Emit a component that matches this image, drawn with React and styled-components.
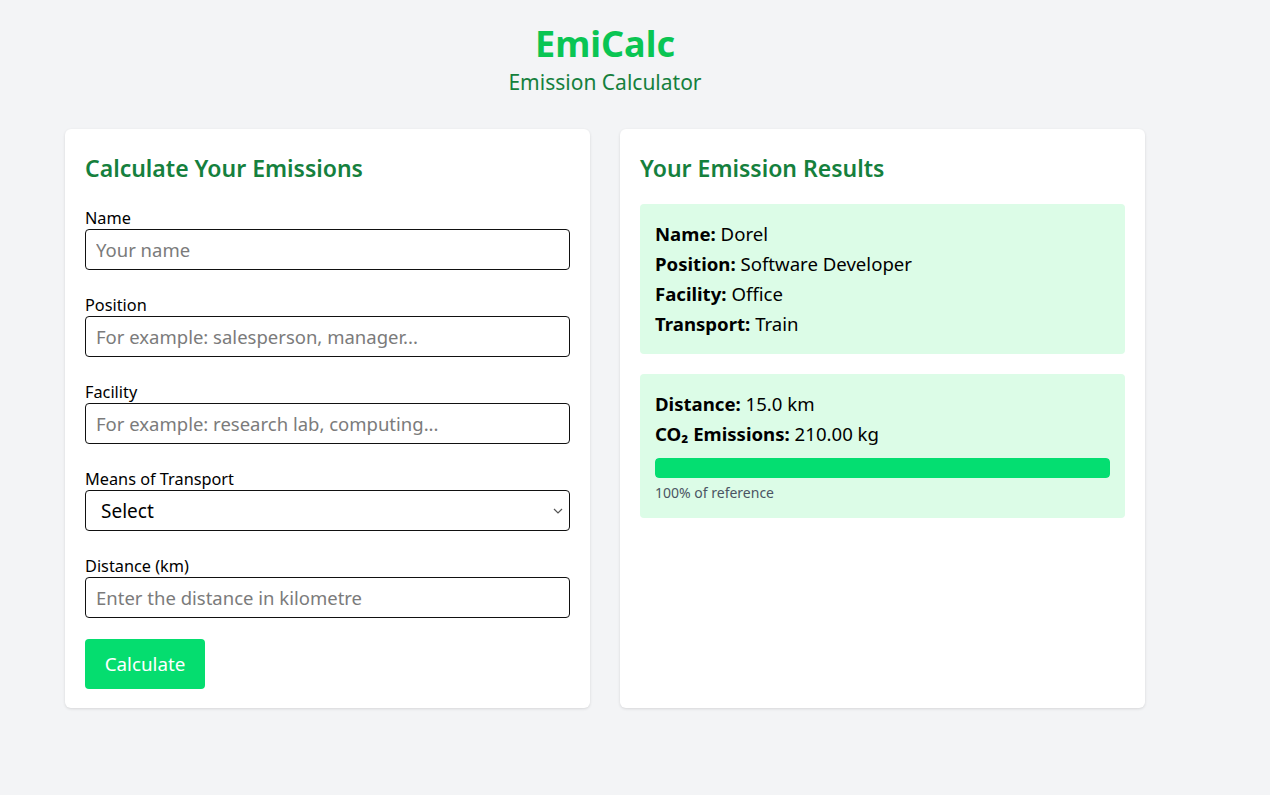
import React from 'react'
import styled, { createGlobalStyle } from 'styled-components'

const GlobalStyle = createGlobalStyle`
    * { box-sizing: border-box; }
    body {
        margin: 0;
        background: #f3f4f6;
        font-family: "Segoe UI", "Noto Sans", sans-serif;
        color: #000;
    }
`

const Page = styled.div`
    min-height: 795px;
    padding: 20px 0 0 65px;
`

const Container = styled.div`
    width: 1080px;
`

const Header = styled.header`
    text-align: center;
    margin-bottom: 33px;
`

const Title = styled.h1`
    margin: 0;
    font-size: 36px;
    font-weight: 700;
    line-height: 48px;
    color: #0ac553;
`

const Subtitle = styled.p`
    margin: 0;
    font-size: 21px;
    line-height: 28px;
    color: #15803d;
`

const Grid = styled.div`
    display: grid;
    grid-template-columns: 1fr 1fr;
    gap: 30px;
`

const Card = styled.section`
    background: #fff;
    border-radius: 6px;
    box-shadow: 0 1px 3px rgba(0, 0, 0, 0.12);
    padding: 20px;
    height: 579px;
`

const CardTitle = styled.h2`
    margin: 4px 0 21px;
    font-size: 23px;
    font-weight: 600;
    line-height: 30px;
    color: #15803d;
`

const Form = styled.form`
    padding-top: 3px;
`

const Field = styled.div`
    margin-bottom: 24px;
`

const Label = styled.label`
    display: block;
    font-size: 16.3px;
    line-height: 22px;
`

const Input = styled.input`
    display: block;
    width: 100%;
    height: 41px;
    padding: 0 10px;
    border: 1px solid #111;
    border-radius: 4px;
    font: inherit;
    font-size: 18.5px;
    &::placeholder { color: #7b7b7b; }
`

const Select = styled.select`
    display: block;
    width: 100%;
    height: 41px;
    padding: 0 15px;
    border: 1px solid #111;
    border-radius: 4px;
    appearance: none;
    background: #fff url("data:image/svg+xml,%3Csvg xmlns='http://www.w3.org/2000/svg' width='10' height='6' viewBox='0 0 10 6'%3E%3Cpath d='M1 1l4 4 4-4' fill='none' stroke='%23555' stroke-width='1.2'/%3E%3C/svg%3E") no-repeat right 6px center;
    font: inherit;
    font-size: 19px;
    color: #000;
`

const Button = styled.button`
    height: 50px;
    width: 120px;
    margin-top: -3px;
    border: none;
    border-radius: 4px;
    background: #05dd6f;
    color: #fff;
    font: inherit;
    font-size: 18.8px;
    cursor: pointer;
`

const ResultBox = styled.div`
    background: #dcfce7;
    border-radius: 4px;
    padding: 15px;
    margin-bottom: 20px;
`

const Line = styled.p`
    margin: 0;
    font-size: 18.6px;
    line-height: 30px;
`

const Bar = styled.div`
    height: 20px;
    margin-top: 9px;
    border-radius: 4px;
    background: #e5e7eb;
    overflow: hidden;
`

const Fill = styled.div`
    height: 100%;
    background: #04de71;
    border-radius: 4px;
`

const Note = styled.p`
    margin: 5px 0 0;
    font-size: 14px;
    line-height: 20px;
    color: #4b5563;
`

const fields = [
    { label: 'Name', placeholder: 'Your name' },
    { label: 'Position', placeholder: 'For example: salesperson, manager...' },
    { label: 'Facility', placeholder: 'For example: research lab, computing...' },
]

const info = [
    ['Name', 'Dorel'],
    ['Position', 'Software Developer'],
    ['Facility', 'Office'],
    ['Transport', 'Train'],
]

export default function App() {
    const percent = 100
    return (
        <>
            <GlobalStyle />
            <Page>
                <Container>
                    <Header>
                        <Title>EmiCalc</Title>
                        <Subtitle>Emission Calculator</Subtitle>
                    </Header>
                    <Grid>
                        <Card>
                            <CardTitle>Calculate Your Emissions</CardTitle>
                            <Form onSubmit={e => e.preventDefault()}>
                                {fields.map(f => (
                                    <Field key={f.label}>
                                        <Label>{f.label}</Label>
                                        <Input placeholder={f.placeholder} />
                                    </Field>
                                ))}
                                <Field>
                                    <Label>Means of Transport</Label>
                                    <Select defaultValue="">
                                        <option value="">Select</option>
                                        <option value="car">Car</option>
                                        <option value="bus">Bus</option>
                                        <option value="train">Train</option>
                                    </Select>
                                </Field>
                                <Field>
                                    <Label>Distance (km)</Label>
                                    <Input placeholder="Enter the distance in kilometre" />
                                </Field>
                                <Button type="submit">Calculate</Button>
                            </Form>
                        </Card>
                        <Card>
                            <CardTitle>Your Emission Results</CardTitle>
                            <ResultBox>
                                {info.map(([k, v]) => (
                                    <Line key={k}><b>{k}:</b> {v}</Line>
                                ))}
                            </ResultBox>
                            <ResultBox>
                                <Line><b>Distance:</b> 15.0 km</Line>
                                <Line><b>CO₂ Emissions:</b> 210.00 kg</Line>
                                <Bar><Fill style={{ width: `${percent}%` }} /></Bar>
                                <Note>{percent}% of reference</Note>
                            </ResultBox>
                        </Card>
                    </Grid>
                </Container>
            </Page>
        </>
    )
}
